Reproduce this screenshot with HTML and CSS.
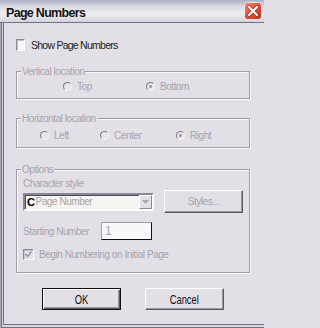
FILE: index.html
```html
<!DOCTYPE html>
<html>
<head>
<meta charset="utf-8">
<link rel="stylesheet" href="styles.css">
</head>
<body>
<div class="titlebar">
  <span class="title">Page Numbers</span>
  <span class="close">
    <svg width="18" height="18" viewBox="0 0 18 18">
      <defs>
        <linearGradient id="cg" x1="0" y1="0" x2="1" y2="1">
          <stop offset="0" stop-color="#f08a78"/>
          <stop offset="0.5" stop-color="#d8503c"/>
          <stop offset="1" stop-color="#b83424"/>
        </linearGradient>
      </defs>
      <rect x="0.5" y="0.5" width="17" height="17" rx="3" fill="url(#cg)" stroke="#f4e8e8"/>
      <path d="M5 5 L13 13 M13 5 L5 13" stroke="#8a2a20" stroke-width="3" stroke-linecap="round"/>
      <path d="M5 5 L13 13 M13 5 L5 13" stroke="#ffffff" stroke-width="2" stroke-linecap="round"/>
    </svg>
  </span>
</div>
<div class="frame">
  <div class="check-row">
    <span class="checkbox"></span>
    <span class="text">Show Page Numbers</span>
  </div>

  <div class="group g1">
    <span class="legend">Vertical location</span>
    <div class="radios">
      <span class="radio-item w83"><span class="radio"></span><span class="dis">Top</span></span>
      <span class="radio-item"><span class="radio checked"></span><span class="dis">Bottom</span></span>
    </div>
  </div>

  <div class="group g2">
    <span class="legend">Horizontal location</span>
    <div class="radios">
      <span class="radio-item w60"><span class="radio"></span><span class="dis">Left</span></span>
      <span class="radio-item w76"><span class="radio"></span><span class="dis">Center</span></span>
      <span class="radio-item"><span class="radio checked"></span><span class="dis">Right</span></span>
    </div>
  </div>

  <div class="group g3">
    <span class="legend">Options</span>
    <div class="field-label dis">Character style</div>
    <div class="style-row">
      <div class="select">
        <span class="c-icon">C</span>
        <span class="dis">Page Number</span>
        <span class="arrow">
          <svg width="7" height="4" viewBox="0 0 7 4"><path d="M0 0 H7 L3.5 4 Z" fill="#a8a6b0"/></svg>
        </span>
      </div>
      <div class="btn small"><span class="dis">Styles...</span></div>
    </div>
    <div class="num-row">
      <span class="dis num-label">Starting Number</span>
      <div class="input"><span class="dis">1</span></div>
    </div>
    <div class="check-row sub">
      <span class="checkbox checked-dis">
        <svg width="9" height="9" viewBox="0 0 9 9"><path d="M1.5 4 L3.5 6.5 L7.5 1.5" fill="none" stroke="#9a98a2" stroke-width="1.6"/></svg>
      </span>
      <span class="dis">Begin Numbering on Initial Page</span>
    </div>
  </div>

  <div class="buttons">
    <div class="btn big default"><span class="cap">OK</span></div>
    <div class="btn big"><span class="cap">Cancel</span></div>
  </div>
</div>
</body>
</html>
```
FILE: styles.css
```css
* { box-sizing: border-box; }
html, body { margin: 0; padding: 0; }
body {
  width: 264px;
  height: 328px;
  overflow: hidden;
  background: #e2dfe6;
  font: 10px "Liberation Sans", Arial, sans-serif;
  letter-spacing: -0.45px;
  color: #1e1e1e;
  white-space: nowrap;
}
.titlebar {
  height: 23px;
  display: flex;
  align-items: flex-start;
  padding: 0 2px 0 6px;
  background: linear-gradient(#aeb2c4 0, #c0c3d0 3px, #d8d9e2 6px, #eeeef2 14px, #d6d6de 21px);
  border-bottom: 1px solid #70708a;
}
.title {
  font-weight: bold;
  font-size: 12.5px;
  letter-spacing: -0.7px;
  line-height: 14px;
  margin-top: 6px;
  color: #141414;
}
.close { margin-left: auto; margin-top: 2px; width: 18px; height: 18px; }
.close svg { display: block; }

.frame {
  height: 305px;
  padding: 16px 0 0 16px;
  box-shadow: inset 1px 0 #aaaab6, inset 0 -1px #70707e, inset 2px 0 #70707e,
    inset 0 -3px #d8d8e0, inset 3px 0 #d8d8e0, inset 4px 0 #70707e, inset 0 -4px #70707e;
}
.dis { color: #a7a4ae; }
.text { font-size: 10.5px; letter-spacing: -0.75px; color: #222; }

.check-row { display: flex; align-items: center; height: 12px; gap: 6px; }
.checkbox {
  width: 9px;
  height: 12px;
  background: #f6f5f7;
  border: 1px solid;
  border-color: #8a8894 #ffffff #ffffff #8a8894;
  box-shadow: inset 1px 1px #c4c2ca;
  display: flex;
  align-items: center;
  justify-content: center;
}
.checkbox.checked-dis { width: 11px; height: 11px; background: #e2dfe6; }
.checkbox svg { display: block; }

.group {
  position: relative;
  width: 234px;
  border: 1px solid #a09ea8;
  box-shadow: inset 1px 1px #f8f8fa, 1px 1px #f8f8fa;
}
.legend {
  position: absolute;
  top: -7px;
  left: 4px;
  padding: 0 1px;
  line-height: 13px;
  background: #e2dfe6;
  color: #a7a4ae;
}
.g1 { margin-top: 20px; height: 28px; padding: 10px 0 0 46px; }
.g2 { margin-top: 19px; height: 30px; padding: 12px 0 0 23px; }
.g3 { margin-top: 21px; height: 104px; padding: 7px 0 0 6px; }

.radios { display: flex; height: 9px; align-items: center; }
.radio-item { display: flex; align-items: center; gap: 5px; line-height: 13px; }
.w83 { width: 83px; }
.w60 { width: 60px; }
.w76 { width: 76px; }
.radio {
  width: 9px;
  height: 9px;
  border-radius: 50%;
  border: 1px solid;
  border-color: #7e7c88 #f4f4f6 #f4f4f6 #7e7c88;
  background: #e8e6ec;
  display: flex;
  align-items: center;
  justify-content: center;
}
.radio.checked::after {
  content: "";
  width: 3px;
  height: 3px;
  border-radius: 50%;
  background: #9896a0;
}

.field-label { height: 13px; line-height: 13px; }
.style-row { display: flex; align-items: center; height: 23px; gap: 10px; }
.select {
  width: 131px;
  height: 18px;
  display: flex;
  align-items: center;
  padding-left: 2px;
  background: #f6f4f0;
  border: 2px solid;
  border-color: #8a8894 #ffffff #ffffff #8a8894;
  box-shadow: inset 1px 1px #4a4a56;
}
.c-icon {
  font: bold 11px "Liberation Sans", Arial, sans-serif;
  color: #000;
  margin-right: 1px;
}
.arrow {
  margin-left: auto;
  width: 13px;
  height: 14px;
  background: #e2dfe6;
  border: 1px solid;
  border-color: #ffffff #8a8894 #8a8894 #ffffff;
  display: flex;
  align-items: center;
  justify-content: center;
}
.arrow svg { display: block; }

.btn {
  display: flex;
  align-items: center;
  justify-content: center;
  background: #e2dfe6;
  border: 1px solid;
  border-color: #ffffff #5a5a66 #5a5a66 #ffffff;
  box-shadow: inset -1px -1px #9896a2;
}
.btn.small { width: 79px; height: 23px; }
.btn.big { width: 79px; height: 22px; color: #101010; }
.cap { display: inline-block; font-size: 13px; letter-spacing: 0; transform: scaleX(0.72); }
.btn.default {
  border: 1px solid #111;
  box-shadow: inset 1px 1px #ffffff, inset -1px -1px #5a5a66, inset -2px -2px #9896a2;
}

.num-row { display: flex; align-items: center; margin-top: 9px; height: 18px; }
.num-label { width: 78px; }
.input {
  width: 51px;
  height: 18px;
  background: #f8f7f9;
  border: 1px solid;
  border-color: #a09ea8 #111111 #111111 #a09ea8;
  padding-left: 3px;
  display: flex;
  align-items: center;
  font-size: 12px;
}
.check-row.sub { margin-top: 9px; height: 11px; gap: 5px; }

.buttons { display: flex; gap: 24px; margin-top: 15px; padding-left: 26px; }
```
